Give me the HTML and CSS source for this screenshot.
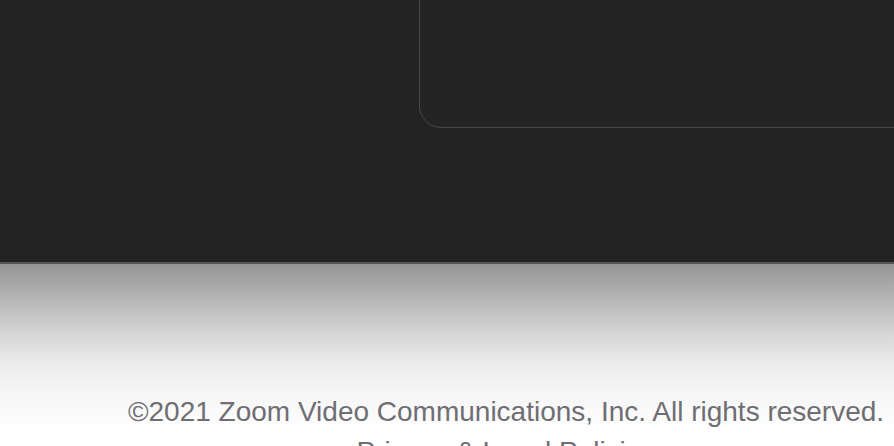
FILE: index.html
```html
<!DOCTYPE html>
<html lang="en">
<head>
<meta charset="utf-8">
<title>Zoom</title>
<link rel="stylesheet" href="styles.css">
</head>
<body>
<div class="page">
  <section class="stage">
    <div class="card"></div>
  </section>
  <div class="shade"></div>
  <footer class="footer">
    <p class="copy">©2021 Zoom Video Communications, Inc. All rights reserved.</p>
    <p class="links"><a href="#">Privacy &amp; Legal Policies</a></p>
  </footer>
</div>
</body>
</html>
```
FILE: styles.css
```css
html, body {
  margin: 0;
  padding: 0;
  overflow: hidden;
  background: #ffffff;
}
.page {
  width: 1012px;
  font-family: "Liberation Sans", Arial, Helvetica, sans-serif;
}
.stage {
  height: 262px;
  background: #232323;
  border-bottom: 2px solid #555555;
  padding-left: 419px;
  overflow: hidden;
}
.card {
  margin-top: -40px;
  height: 166px;
  width: 700px;
  border: 1.5px solid #48484d;
  border-radius: 22px;
  background: #242424;
}
.shade {
  height: 128px;
  background: linear-gradient(to bottom, #959595 0%, #b3b3b3 25%, #d6d6d6 55%, #ececec 78%, #f5f5f5 100%);
}
.footer {
  text-align: center;
  color: #6e6e73;
  font-size: 28px;
  line-height: 40px;
  background: linear-gradient(to bottom, #f5f5f5, #ffffff 40px);
}
.footer p {
  margin: 0;
}
.links a {
  color: #6e6e73;
  text-decoration: none;
}
```
